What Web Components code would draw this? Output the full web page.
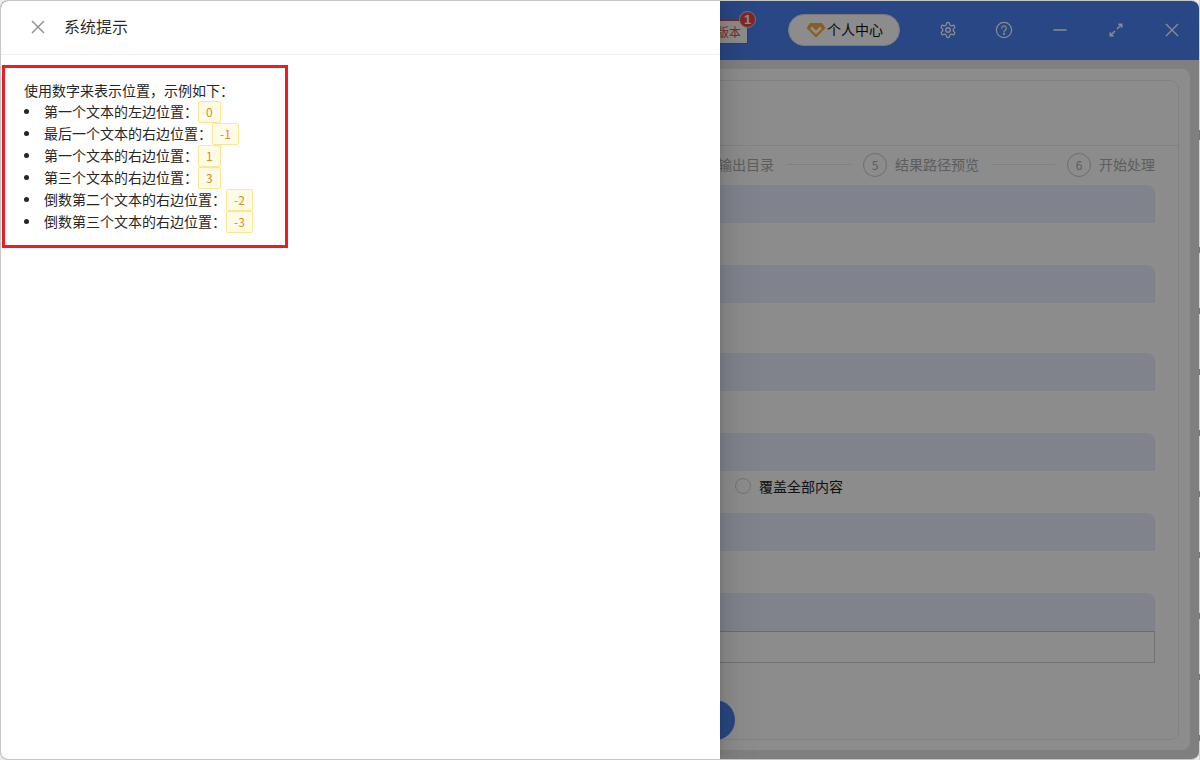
<!DOCTYPE html>
<html lang="zh">
<head>
<meta charset="utf-8">
<title>系统提示</title>
<style>
html, body { margin: 0; padding: 0; height: 760px; overflow: hidden; }
body {
    display: flex;
    background: #ececec;
    font-family: "Noto Sans CJK SC", "Noto Sans", sans-serif;
    font-size: 14px;
}
</style>
</head>
<body>
<app-window>
    <app-header slot="header"></app-header>
    <work-panel>
        <step-bar slot="steps">
            <step-item first>输出目录</step-item>
            <step-item num="5">结果路径预览</step-item>
            <step-item num="6">开始处理</step-item>
        </step-bar>
        <form-section></form-section>
        <form-section tall></form-section>
        <form-section></form-section>
        <form-section>
            <radio-option>覆盖全部内容</radio-option>
        </form-section>
        <form-section></form-section>
        <form-section flush><input-box></input-box></form-section>
    </work-panel>
    <side-drawer slot="drawer" heading="系统提示">
        <hint-box>
            <span slot="intro">使用数字来表示位置，示例如下：</span>
            <li>第一个文本的左边位置：<pos-tag>0</pos-tag></li>
            <li>最后一个文本的右边位置：<pos-tag>-1</pos-tag></li>
            <li>第一个文本的右边位置：<pos-tag>1</pos-tag></li>
            <li>第三个文本的右边位置：<pos-tag>3</pos-tag></li>
            <li>倒数第二个文本的右边位置：<pos-tag>-2</pos-tag></li>
            <li>倒数第三个文本的右边位置：<pos-tag>-3</pos-tag></li>
        </hint-box>
    </side-drawer>
</app-window>
<desk-strip></desk-strip>

<script>
// small helper, every element is just a style + markup in an open shadow root
function define(name, html, extra) {
    class El extends HTMLElement {
        constructor() {
            super();
            this.attachShadow({ mode: 'open' });
            this.shadowRoot.innerHTML = html;
        }
        connectedCallback() {
            if (extra) extra(this);
        }
    }
    customElements.define(name, El);
}

define('desk-strip', `
<style>
:host {
    display: block;
    flex: 0 0 1px;
    height: 760px;
    background-color: #d4d4d4;
    background-image:
        repeating-linear-gradient(#4f7fb3 0 6px, transparent 6px 61px),
        linear-gradient(#4f7fb3, #4f7fb3);
    background-position: 0 247px, 0 130px;
    background-size: 1px 513px, 1px 10px;
    background-repeat: no-repeat;
}
</style>`);

define('app-window', `
<style>
:host {
    display: flex;
    flex-direction: column;
    position: relative;
    flex: 0 0 1199px;
    box-sizing: border-box;
    height: 760px;
    border: 1px solid #c6c6c6;
    border-right: 0;
    border-radius: 8px;
    overflow: hidden;
    background: #e8e8e8;
}
.mask { position: absolute; inset: 0; background: rgba(0, 0, 0, .45); }
</style>
<slot name="header"></slot>
<slot></slot>
<div class="mask"></div>
<slot name="drawer"></slot>`);

define('app-header', `
<style>
:host {
    display: flex;
    align-items: center;
    justify-content: flex-end;
    flex: 0 0 59px;
    box-sizing: border-box;
    padding-bottom: 1px;
    margin-right: -1px;
    background: #4981f1;
    color: #fff;
}
.ver {
    position: relative;
    box-sizing: border-box;
    height: 24px;
    line-height: 21px;
    margin: 3px 40px 0 0;
    padding: 0 6px 0 6px;
    font-size: 12px;
    color: #e84b4b;
    background: #fff;
    border: 1px solid #e04444;
}
.badge {
    position: absolute;
    top: -10px;
    right: -9px;
    box-sizing: border-box;
    width: 17px;
    height: 17px;
    border-radius: 50%;
    border: 1px solid #d9d9d9;
    background: #ea4545;
    color: #fff;
    font: bold 13px/15px "Liberation Sans", sans-serif;
    text-align: center;
}
.pill {
    display: flex;
    align-items: center;
    gap: 1px;
    box-sizing: border-box;
    width: 112px;
    height: 32px;
    margin-right: 20px;
    padding-left: 17px;
    border-radius: 16px;
    border: 1px solid #dcdcdc;
    background: #fff;
    color: #111;
    font-size: 14px;
}
.pill span { margin-bottom: 2px; }
.btn { display: flex; align-items: center; justify-content: center; width: 56px; height: 40px; }
svg { display: block; }
</style>
<div class="ver">版本<span class="badge">1</span></div>
<div class="pill">
    <svg width="20" height="16" viewBox="0 0 20 16">
        <path d="M4 1h12l3.400 5L10 15.400 .6 6z" fill="#f5ac35"/>
        <path d="M5 5.500 10 10.500l5-5" fill="none" stroke="#fff" stroke-width="2.800"/>
    </svg>
    <span>个人中心</span>
</div>
<div class="btn">
    <svg width="18" height="18" viewBox="0 0 24 24" fill="none" stroke="#fff" stroke-width="1.700" stroke-linejoin="round">
        <path d="M12.220 2h-.44a2 2 0 0 0-2 2v.18a2 2 0 0 1-1 1.730l-.43.25a2 2 0 0 1-2 0l-.15-.08a2 2 0 0 0-2.730.73l-.22.38a2 2 0 0 0 .73 2.730l.15.1a2 2 0 0 1 1 1.720v.51a2 2 0 0 1-1 1.740l-.15.09a2 2 0 0 0-.73 2.730l.22.38a2 2 0 0 0 2.730.73l.15-.08a2 2 0 0 1 2 0l.43.25a2 2 0 0 1 1 1.730V20a2 2 0 0 0 2 2h.44a2 2 0 0 0 2-2v-.18a2 2 0 0 1 1-1.730l.43-.25a2 2 0 0 1 2 0l.15.08a2 2 0 0 0 2.730-.73l.22-.39a2 2 0 0 0-.73-2.730l-.15-.08a2 2 0 0 1-1-1.740v-.5a2 2 0 0 1 1-1.740l.15-.09a2 2 0 0 0 .73-2.730l-.22-.38a2 2 0 0 0-2.730-.73l-.15.08a2 2 0 0 1-2 0l-.43-.25a2 2 0 0 1-1-1.730V4a2 2 0 0 0-2-2z"/>
        <circle cx="12" cy="12" r="3"/>
    </svg>
</div>
<div class="btn">
    <svg width="18" height="18" viewBox="0 0 18 18" fill="none" stroke="#fff" stroke-width="1.200" stroke-linecap="round">
        <circle cx="9" cy="9" r="7.600"/>
        <path d="M6.700 7.200a2.300 2.300 0 1 1 3.500 2c-.8.5-1.200.9-1.200 1.800"/>
        <circle cx="9" cy="13" r=".5" fill="#fff"/>
    </svg>
</div>
<div class="btn">
    <svg width="16" height="16" viewBox="0 0 16 16" fill="none" stroke="#fff" stroke-width="1.500"><path d="M1.500 8h13"/></svg>
</div>
<div class="btn">
    <svg width="16" height="16" viewBox="0 0 16 16" fill="none" stroke="#fff" stroke-width="1.500">
        <path d="M9 7 13.700 2.300M10.300 2.300h3.400v3.400M7 9 2.300 13.700M2.300 10.300v3.400h3.400"/>
    </svg>
</div>
<div class="btn">
    <svg width="16" height="16" viewBox="0 0 16 16" fill="none" stroke="#fff" stroke-width="1.400"><path d="M2 2l12 12M14 2 2 14"/></svg>
</div>`);

define('work-panel', `
<style>
:host {
    display: flex;
    flex: 1;
    min-height: 0;
    padding: 9px 9px 9px 10px;
}
.outer {
    flex: 1;
    display: flex;
    border-radius: 8px;
    background: #fff;
    padding: 11px 11px 10px 10px;
}
.card {
    flex: 1;
    display: flex;
    flex-direction: column;
    box-sizing: border-box;
    border: 1px solid #ececec;
    border-radius: 8px;
}
.top { flex: 0 0 64px; border-bottom: 1px solid #ececec; }
.body { display: flex; flex-direction: column; padding: 0 23px; }
.foot { margin-top: auto; display: flex; justify-content: center; margin-bottom: -1px; }
.start { width: 270px; height: 40px; border-radius: 20px; background: #4981f1; }
</style>
<div class="outer">
    <div class="card">
        <div class="top"></div>
        <div class="body">
            <slot name="steps"></slot>
            <slot></slot>
        </div>
        <div class="foot"><div class="start"></div></div>
    </div>
</div>`);

define('step-bar', `
<style>
:host {
    display: flex;
    align-items: center;
    justify-content: flex-end;
    box-sizing: border-box;
    height: 39px;
    padding-bottom: 4px;
}
</style>
<slot></slot>`);

define('step-item', `
<style>
:host { display: flex; align-items: center; font-size: 14px; color: #aaa; }
:host([first]) { margin-right: 1px; }
.line { width: 64px; height: 1px; margin: 2px 12px 0; background: #e8e8e8; }
.num {
    box-sizing: border-box;
    width: 24px;
    height: 24px;
    line-height: 22px;
    margin: 2px 8px 0 0;
    border: 1px solid #c8c8c8;
    border-radius: 50%;
    text-align: center;
    font-size: 12px;
}
:host([first]) .line, :host([first]) .num { display: none; }
</style>
<span class="line"></span><span class="num"></span><slot></slot>`, el => {
    el.shadowRoot.querySelector('.num').textContent = el.getAttribute('num') || '';
});

define('form-section', `
<style>
:host { display: block; }
.bar { height: 38px; background: #e9eeff; border-radius: 8px 8px 0 0; }
.content { min-height: 42px; box-sizing: border-box; display: flex; justify-content: flex-end; }
:host([tall]) .content { min-height: 50px; }
:host([flush]) .content { display: block; min-height: 0; }
</style>
<div class="bar"></div>
<div class="content"><slot></slot></div>`);

define('radio-option', `
<style>
:host {
    display: flex;
    align-items: center;
    gap: 8px;
    height: 30px;
    width: 420px;
    font-size: 14px;
    color: #222;
}
.dot { box-sizing: border-box; width: 16px; height: 16px; border: 1px solid #d0d0d0; border-radius: 50%; background: #fff; }
</style>
<span class="dot"></span><slot></slot>`);

define('input-box', `
<style>
:host { display: block; box-sizing: border-box; height: 32px; border: 1px solid #d0d0d0; border-top-color: #c4c4c4; }
</style>`);

define('side-drawer', `
<style>
:host {
    position: absolute;
    top: 0;
    left: 0;
    bottom: 0;
    width: 719px;
    display: flex;
    flex-direction: column;
    background: #fff;
    box-shadow: 6px 0 16px 0 rgba(0,0,0,.08), 3px 0 6px -4px rgba(0,0,0,.12), 9px 0 28px 8px rgba(0,0,0,.05);
}
header {
    display: flex;
    align-items: center;
    gap: 18px;
    box-sizing: border-box;
    height: 54px;
    padding: 0 0 2px 29px;
    border-bottom: 1px solid #f0f0f0;
    font-size: 16px;
    color: rgba(0,0,0,.85);
}
.title { margin-bottom: 2px; }
svg { display: block; }
</style>
<header>
    <svg width="16" height="16" viewBox="0 0 16 16" fill="none" stroke="#8c8c8c" stroke-width="1.400"><path d="M2 2l12 12M14 2 2 14"/></svg>
    <span class="title"></span>
</header>
<div><slot></slot></div>`, el => {
    el.shadowRoot.querySelector('.title').textContent = el.getAttribute('heading');
});

define('hint-box', `
<style>
:host {
    display: block;
    box-sizing: border-box;
    width: 286px;
    height: 183px;
    margin: 10px 0 0 1px;
    padding: 11px 0 0 19px;
    border: 3px solid #ed1c24;
    font-size: 14px;
    line-height: 22px;
    color: #262626;
}
.intro { display: block; }
ul { margin: -1px 0 0; padding: 0 0 0 20px; }
::slotted(li) { display: block; height: 22px; white-space: nowrap; }
::slotted(li)::before {
    content: "";
    display: inline-block;
    width: 5px;
    height: 5px;
    margin: 0 15px 0 -20px;
    border-radius: 50%;
    background: #262626;
    vertical-align: 3px;
}
</style>
<div class="intro"><slot name="intro"></slot></div>
<ul><slot></slot></ul>`);

define('pos-tag', `
<style>
:host {
    display: inline-block;
    box-sizing: border-box;
    height: 22px;
    line-height: 20px;
    margin: 1px 0 -1px;
    padding: 0 7px;
    vertical-align: top;
    font-size: 12px;
    color: #d58f20;
    background: #fffbe6;
    border: 1px solid #ffe58f;
    border-radius: 2px;
}
</style>
<slot></slot>`);
</script>
</body>
</html>
